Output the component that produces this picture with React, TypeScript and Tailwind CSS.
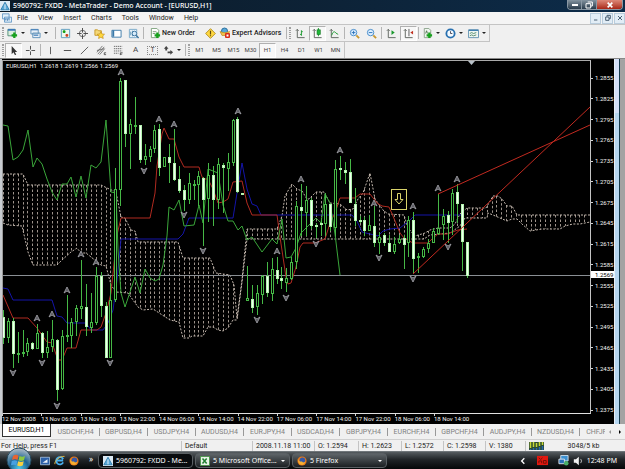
import type { ReactNode } from "react";
import clsx from "clsx";

type Point = [number, number];
// high, body top, body bottom, low, filled
type Candle = [number, number, number, number, 0 | 1];

const candles: Candle[] = [
  [310, 317, 338, 344, 1], [318, 321, 338, 343, 0], [318, 321, 354, 368, 1], [332, 353, 355, 363, 0],
  [330, 352, 353, 357, 0], [338, 343, 352, 356, 0], [342, 343, 349, 350, 1], [324, 333, 349, 349, 0],
  [332, 333, 353, 358, 1], [331, 347, 353, 358, 0], [320, 339, 347, 352, 0], [339, 340, 390, 401, 1],
  [330, 336, 389, 390, 0], [295, 335, 336, 342, 0], [318, 322, 336, 348, 0], [305, 308, 322, 336, 0],
  [260, 306, 309, 319, 0], [284, 307, 327, 336, 1], [293, 322, 328, 333, 0], [267, 276, 323, 325, 0],
  [272, 276, 306, 317, 1], [302, 306, 358, 358, 1], [283, 300, 358, 358, 0], [168, 189, 300, 302, 0],
  [78, 81, 190, 206, 0], [80, 80, 134, 147, 1], [119, 124, 134, 169, 0], [97, 125, 126, 134, 0],
  [125, 125, 160, 163, 1], [144, 156, 160, 165, 0], [146, 149, 157, 162, 0], [125, 130, 149, 153, 0],
  [124, 129, 168, 176, 1], [157, 157, 167, 167, 0], [144, 157, 163, 183, 1], [129, 163, 180, 181, 1],
  [166, 179, 191, 193, 1], [185, 190, 200, 211, 1], [173, 183, 200, 204, 0], [180, 184, 185, 200, 0],
  [171, 176, 185, 206, 0], [177, 178, 200, 246, 1], [163, 175, 199, 222, 0], [166, 175, 200, 226, 1],
  [158, 164, 200, 209, 0], [163, 165, 168, 213, 1], [153, 162, 169, 191, 0], [119, 120, 163, 166, 0],
  [117, 119, 192, 193, 1], [193, 193, 195, 195, 1], [266, 298, 301, 301, 0], [285, 299, 308, 313, 1],
  [285, 293, 307, 315, 0], [275, 276, 295, 304, 0], [262, 276, 293, 297, 1], [258, 269, 294, 301, 0],
  [257, 270, 279, 284, 1], [267, 278, 281, 289, 1], [268, 278, 283, 292, 0], [257, 262, 279, 280, 0],
  [201, 206, 262, 269, 0], [184, 207, 211, 236, 1], [186, 200, 213, 236, 0], [198, 200, 226, 229, 1],
  [223, 225, 226, 238, 1], [218, 223, 224, 236, 1], [193, 204, 224, 236, 0], [203, 204, 227, 231, 1],
  [160, 169, 228, 236, 0], [156, 168, 169, 180, 1], [162, 170, 173, 184, 1], [159, 172, 203, 203, 1],
  [188, 204, 221, 226, 1], [216, 220, 221, 223, 1], [217, 220, 231, 236, 1], [215, 225, 231, 231, 0],
  [206, 226, 243, 247, 1], [232, 237, 243, 254, 0], [233, 235, 243, 246, 1], [235, 243, 252, 252, 1],
  [237, 244, 252, 254, 0], [235, 239, 243, 244, 0], [235, 238, 245, 269, 1], [216, 220, 243, 257, 0],
  [212, 220, 259, 274, 1], [253, 256, 258, 273, 0], [247, 249, 257, 258, 0], [239, 243, 249, 253, 0],
  [228, 231, 243, 243, 0], [194, 228, 234, 235, 0], [209, 216, 225, 240, 0], [211, 215, 223, 243, 1],
  [189, 193, 222, 235, 0], [184, 192, 204, 223, 1], [204, 204, 242, 271, 1], [242, 242, 276, 278, 1],
];

const chikou = `3,125 8,126 13,160 18,157 23,150 28,130 33,167 37,158 42,164 47,179 52,192 57,200 62,184 67,184
 71,177 76,197 81,176 86,198 91,165 96,168 101,162 106,120 111,192 116,193 118,250 121,293 125,307 135,277
 140,293 145,269 150,278 155,281 159,279 163,265 167,236 169,207 174,210 179,200 184,226 194,225 199,205
 203,223 208,169 213,171 218,173 223,205 228,221 233,221 238,230 242,226 247,240 252,237 262,252 272,239
 277,244 282,219 286,258 291,257 296,248 301,233 316,218 321,223 325,194 330,203 335,234 340,275`;

const tenkan = `3,295 13,318 28,318 37,328 47,342 52,343 58,360 62,360 67,348 76,348 81,330 97,330 101,327
 106,313 111,293 117,235 121,218 150,218 155,193 157,166 162,134 164,128 169,139 174,139 179,157 184,167
 199,167 201,174 203,179 208,179 213,189 218,203 223,202 228,199 233,182 242,181 247,203 252,215 277,215
 280,237 286,277 288,284 291,283 296,267 300,247 303,243 315,243 325,239 330,223 335,213 340,198 355,198
 360,194 370,194 377,203 382,206 389,207 393,216 400,233 404,238 413,243 428,243 433,238 438,234 447,234
 458,230 467,229`;

const kijun = `3,288 8,289 13,300 52,300 57,316 62,317 67,323 86,323 91,330 103,330 108,323 113,310 117,280
 121,239 178,239 183,234 189,218 233,218 237,193 242,163 247,189 252,204 257,206 261,215 352,215 357,221
 362,232 378,236 383,231 390,229 400,228 410,220 415,215 462,215`;

const cloudTop: Point[] = [
  [3, 174], [23, 174], [28, 185], [101, 185], [107, 188], [116, 192], [121, 217], [125, 218], [131, 230],
  [135, 231], [138, 242], [178, 242], [183, 258], [210, 258], [216, 273], [230, 275], [234, 285], [237, 318],
  [242, 280], [247, 229], [277, 229], [282, 216], [285, 196], [292, 184], [297, 189], [302, 191], [307, 199],
  [309, 199], [316, 192], [324, 192], [330, 203], [340, 204], [347, 210], [353, 209], [358, 199], [363, 193],
  [370, 173], [375, 199], [383, 210], [388, 214], [404, 215], [408, 228], [415, 236], [425, 233], [430, 230],
  [438, 228], [450, 228], [455, 224], [460, 214], [467, 208], [486, 208], [493, 196], [498, 196], [502, 199],
  [507, 206], [512, 206], [517, 215], [590, 215],
];

const cloudBottom: Point[] = [
  [3, 223], [8, 225], [22, 226], [28, 252], [33, 265], [57, 265], [62, 260], [71, 252], [77, 248], [81, 253],
  [86, 253], [91, 257], [101, 265], [106, 266], [111, 285], [116, 292], [128, 293], [138, 307], [143, 310],
  [153, 309], [170, 320], [179, 322], [183, 338], [189, 338], [192, 336], [203, 336], [208, 327], [213, 327],
  [218, 330], [223, 331], [228, 328], [233, 320], [237, 320], [242, 282], [247, 239], [415, 239], [424, 239],
  [430, 235], [450, 233], [460, 226], [465, 218], [487, 218], [488, 213], [493, 215], [500, 218], [507, 221],
  [512, 219], [517, 219], [522, 224], [530, 231], [542, 229], [560, 229], [565, 226], [573, 224], [580, 224],
  [590, 222],
];

const peaks: Point[] = [
  [121, 72], [37, 318], [52, 314], [67, 290], [81, 254], [96, 262], [159, 119], [174, 124], [238, 111],
  [301, 179], [340, 150], [374, 203], [413, 206], [438, 188], [457, 179], [277, 251],
];

const valleys: Point[] = [
  [144, 171], [13, 373], [42, 363], [57, 406], [110, 363], [184, 215], [203, 251], [257, 320], [286, 298],
  [316, 244], [379, 258], [413, 279], [448, 247],
];

const prices = Array.from({ length: 17 }, (_, i) => (1.2855 - i * 0.003).toFixed(4));

const times = [
  "12 Nov 2008", "13 Nov 06:00", "13 Nov 14:00", "13 Nov 22:00", "14 Nov 06:00", "14 Nov 14:00",
  "14 Nov 22:00", "17 Nov 06:00", "17 Nov 14:00", "17 Nov 22:00", "18 Nov 06:00", "18 Nov 14:00",
];

const menus = ["File", "View", "Insert", "Charts", "Tools", "Window", "Help"];
const periods = ["M1", "M5", "M15", "M30", "H1", "H4", "D1", "W1", "MN"];
const symbols = [
  "USDCHF,H4", "GBPUSD,H4", "USDJPY,H4", "AUDUSD,H4", "EURJPY,H4", "USDCAD,H4",
  "GBPJPY,H4", "EURCHF,H4", "GBPCHF,H4", "AUDJPY,H4", "NZDUSD,H4", "CHFJPY,H4",
];

const barX = (i: number) => Math.round(3 + i * 4.885) + 0.5;

function yAt(line: Point[], x: number) {
  for (let i = 1; i < line.length; i++) {
    const [x0, y0] = line[i - 1];
    const [x1, y1] = line[i];
    if (x <= x1) return y0 + ((y1 - y0) * (x - x0)) / (x1 - x0);
  }
  return line[line.length - 1][1];
}

function Plot() {
  return (
    <svg viewBox="3 61 587 352" preserveAspectRatio="none" className="absolute inset-0 h-full w-full" fill="none">
      <g stroke="#c4b8ae" strokeWidth="1">
        <polyline points={cloudTop.join(" ")} strokeDasharray="2 1.5" />
        <polyline points={cloudBottom.join(" ")} strokeDasharray="2 1.5" />
        {Array.from({ length: 120 }, (_, i) => {
          const x = barX(i);
          return (
            <line key={i} x1={x} x2={x} y1={yAt(cloudTop, x)} y2={yAt(cloudBottom, x)} strokeDasharray="2.5 2" opacity="0.8" />
          );
        })}
      </g>
      <path d="M3 275.500H590" stroke="#8a8f94" />
      <polyline points={kijun} stroke="#1414a8" />
      <polyline points={tenkan} stroke="#b02a20" />
      <polyline points={chikou} stroke="#3aa63a" />
      {candles.map(([high, top, bottom, low, filled], i) => (
        <g key={i} stroke="#46b846">
          <path d={`M${barX(i)} ${high}V${top}M${barX(i)} ${bottom}V${low}`} />
          <rect
            x={barX(i) - 1}
            y={top + 0.5}
            width="2"
            height={Math.max(bottom - top - 1, 1)}
            fill={filled ? "#f0fff0" : "#000"}
            stroke={filled ? "#b4f5b0" : "#46b846"}
          />
        </g>
      ))}
      <g stroke="#c22a20">
        <path d="M438 194L590 125" />
        <path d="M413 274L590 107" />
      </g>
      <g fill="#55555c" stroke="#a8a8ae" strokeWidth="0.8">
        {peaks.map(([x, y]) => (
          <path key={`${x}-${y}`} d={`M${x - 3} ${y + 3}L${x} ${y - 3}L${x + 3} ${y + 3}L${x} ${y + 1}Z`} />
        ))}
        {valleys.map(([x, y]) => (
          <path key={`${x}-${y}`} d={`M${x - 3} ${y - 3}L${x} ${y + 3}L${x + 3} ${y - 3}L${x} ${y - 1}Z`} />
        ))}
      </g>
      <g stroke="#d9d36a">
        <rect x="391.500" y="189.500" width="15" height="20" />
        <path d="M397.500 193.500h3v6h2.500l-4 4.500l-4-4.500h2.500z" />
      </g>
      <path d="M468 61h7l-3.500 4z" fill="#b8c0c8" />
    </svg>
  );
}

function Chart() {
  return (
    <main className="flex min-h-0 flex-1 bg-[#a3a3a3]">
      <div className="w-0.5 bg-[#c8ccd0]" />
      <section className="flex min-w-0 flex-1 bg-black pt-px text-[6px] leading-[8px] text-[#f4f4f4]">
        <div className="flex min-w-0 flex-1 flex-col">
          <div className="relative min-h-0 flex-1 border border-l-[#9a9a9a] border-t-[#aaa] border-r-[#c4c4c4] border-b-[#e0e0e0]">
            <Plot />
            <p className="absolute left-[3px] top-px whitespace-pre">EURUSD,H1  1.2618 1.2619 1.2566 1.2569</p>
          </div>
          <div className="grid h-[10px] grid-cols-15 pt-px">
            {times.map((time) => (
              <span key={time} className="relative whitespace-nowrap">
                <i className="absolute -top-px left-0 h-0.5 w-px bg-[#d0d0d0]" />
                {time}
              </span>
            ))}
          </div>
        </div>
        <div className="relative flex w-[23px] flex-col justify-between pb-[10px] pt-[14px]">
          {prices.map((price) => (
            <span key={price} className="flex items-center gap-0.5">
              <i className="h-px w-0.5 bg-[#d0d0d0]" />
              {price}
            </span>
          ))}
          <span className="absolute left-0 top-[58%] w-full bg-white pl-1 leading-[7px] text-black">1.2569</span>
        </div>
      </section>
      <div className="flex w-[6px] flex-col border-l border-r border-l-[#e8f0f8] border-r-[#163a4c] bg-[#b6d6f0]">
        <div className="h-[54px] bg-[#d3dff8]" />
      </div>
      <div className="w-[5px] bg-[#a3a3a3]" />
    </main>
  );
}

function Icon({ children, size = "h-[11px] w-[11px]" }: { children: ReactNode; size?: string }) {
  return (
    <svg viewBox="0 0 12 12" className={clsx("shrink-0", size)} fill="none" strokeWidth="1" aria-hidden="true">
      {children}
    </svg>
  );
}

const plus = <path d="M8 5v6M5 8h6" stroke="#16a01c" strokeWidth="2.500" />;
const axes = <path d="M2.500 1.500v9h8M1 3l1.500-1.500L4 3" stroke="#5a5f5a" />;

function Tool({ label, pressed, children }: { label: string; pressed?: boolean; children: ReactNode }) {
  return (
    <button
      type="button"
      aria-label={label}
      className={clsx(
        "flex h-[15px] w-[17px] shrink-0 items-center justify-center",
        pressed && "border border-[#b0b0b0] border-r-white border-b-white bg-[#f8f8f8]",
      )}
    >
      {children}
    </button>
  );
}

function DropTool({ label, children }: { label: string; children: ReactNode }) {
  return (
    <button type="button" aria-label={label} className="flex h-[15px] w-[23px] shrink-0 items-center gap-[3px] pl-0.5">
      {children}
      <i className="border-x-2 border-t-2 border-x-transparent border-t-[#222]" />
    </button>
  );
}

const Sep = () => <i className="mx-px h-3 w-px shrink-0 bg-[#b4b4b4]" />;
const Grip = () => <i className="mx-px h-3 w-0.5 shrink-0 border-x border-dotted border-[#a0a0a0]" />;

function StandardToolbar() {
  return (
    <div className="flex h-[17px] w-[490px] items-center border-b border-r border-[#c4c4c4] pl-px">
      <Grip />
      <DropTool label="New chart">
        <Icon>
          <path d="M1 1.500h8v7H1z" fill="#dcefe0" stroke="#4f8c74" />
          <path d="M1 2h8" stroke="#3a78b8" strokeWidth="2" />
          {plus}
        </Icon>
      </DropTool>
      <DropTool label="Profiles">
        <Icon>
          <path d="M1 1.500h8v5H1zM3 5.500h8v5H3z" fill="#e8f0f8" stroke="#5d8fb8" />
          <path d="M1 2h8M4 8h5" stroke="#3a78b8" />
        </Icon>
      </DropTool>
      <div className="w-[3px]" />
      <Sep />
      <Tool label="Market Watch">
        <Icon>
          <path d="M1.500 1.500h9v9h-9z" fill="#eef8ee" stroke="#5c9cc0" />
          <path d="M3 4h3M4.500 2.500v3" stroke="#18a018" strokeWidth="2" />
          <path d="M6 8h3M7.500 6.500v3" stroke="#d04020" strokeWidth="2" />
        </Icon>
      </Tool>
      <Tool label="Data Window">
        <Icon>
          <circle cx="6" cy="6" r="3.500" stroke="#666" />
          <path d="M6 0v5M6 7v5M0 6h5M7 6h5" stroke="#444" />
        </Icon>
      </Tool>
      <Tool label="Navigator">
        <Icon>
          <path d="M1 2h3l1 1h3v5H1z" fill="#f4d878" stroke="#c89828" />
          <path d="M7.500 4l1.200 2.500 2.800.3-2 1.900.6 2.800-2.600-1.400L5 11.500l.5-2.800-2-1.900 2.800-.3z" fill="#ffd83c" stroke="#c08c18" strokeWidth=".7" />
        </Icon>
      </Tool>
      <Tool label="Terminal">
        <Icon>
          <path d="M1 2.500h10v7.500H1z" fill="#fff" stroke="#3a78a8" />
          <path d="M2.500 2.500v7" stroke="#3a78a8" strokeWidth="2" />
        </Icon>
      </Tool>
      <Tool label="Strategy Tester">
        <Icon>
          <path d="M1.500 1.500h8v9h-8z" fill="#e8f2fa" stroke="#78a8c8" />
          <path d="M3 8V4M5 9V3" stroke="#5890b0" />
          <circle cx="7" cy="6" r="2.500" fill="#d8ecfa" stroke="#38709c" />
          <path d="M9 8l2.500 3" stroke="#38709c" strokeWidth="1.500" />
        </Icon>
      </Tool>
      <Sep />
      <div className="w-[3px]" />
      <button type="button" className="flex w-[55px] shrink-0 items-center gap-px pl-[3px] text-[7px] font-medium whitespace-nowrap">
        <Icon>
          <path d="M1.500.5h6l2 2v8h-8z" fill="#fff" stroke="#78a078" />
          <path d="M3 4h4M3 6h3" stroke="#789878" />
          {plus}
        </Icon>
        New Order
      </button>
      <Tool label="MetaEditor">
        <Icon>
          <path d="M6 .7L11.300 6 6 11.300.7 6z" fill="#ffd840" stroke="#b08c20" />
          <path d="M6 3v4M6 8v1" stroke="#5c4810" strokeWidth="1.300" />
        </Icon>
      </Tool>
      <button type="button" className="flex w-[66px] shrink-0 items-center gap-px text-[7px] font-medium whitespace-nowrap">
        <Icon size="h-3 w-3">
          <circle cx="5.500" cy="4" r="3" fill="#58a8d8" stroke="#2c70a0" />
          <path d="M1 4.500c3 1.500 6 1.500 9.500 0L9 8.500H3z" fill="#f0c048" stroke="#c08c20" strokeWidth=".7" />
          <rect x="6" y="6" width="5" height="5" rx="1" fill="#d82c18" />
          <rect x="7.500" y="7.500" width="2" height="2" fill="#fff" />
        </Icon>
        Expert Advisors
      </button>
      <Sep />
      <Grip />
      <Tool label="Bar Chart">
        <Icon>{axes}<path d="M7 2.500v6M5.500 7H7M7 4h1.500" stroke="#18982c" /></Icon>
      </Tool>
      <Tool label="Candlesticks" pressed>
        <Icon>{axes}<path d="M7 0v9" stroke="#18982c" /><rect x="5.500" y="2" width="3.500" height="5" fill="#20b838" stroke="#107820" strokeWidth=".7" /></Icon>
      </Tool>
      <Tool label="Line Chart">
        <Icon>{axes}<path d="M3 8c1-4 3-5 4.500-2.500L10 7" stroke="#18982c" /></Icon>
      </Tool>
      <Sep />
      <Tool label="Zoom In">
        <Icon>
          <circle cx="5" cy="5" r="3.500" fill="#e0f0ff" stroke="#4088c8" />
          <path d="M5 3v4M3 5h4" stroke="#2870b8" />
          <path d="M8 8l3 3" stroke="#c89830" strokeWidth="2" />
        </Icon>
      </Tool>
      <Tool label="Zoom Out">
        <Icon>
          <circle cx="5" cy="5" r="3.500" fill="#e0f0ff" stroke="#4088c8" />
          <path d="M3 5h4" stroke="#2870b8" />
          <path d="M8 8l3 3" stroke="#c89830" strokeWidth="2" />
        </Icon>
      </Tool>
      <Sep />
      <Tool label="Auto Scroll">
        <Icon>{axes}<path d="M6 2.500l3.500 2.500L6 7.500z" fill="#18982c" /></Icon>
      </Tool>
      <Tool label="Chart Shift" pressed>
        <Icon>{axes}<path d="M6.500 1v8" stroke="#555" /><path d="M11 3v4L8 5z" fill="#c03020" /></Icon>
      </Tool>
      <Sep />
      <DropTool label="Indicators">
        <Icon>
          <path d="M2.500.5h5l2 2v8h-7z" fill="#eef6ee" stroke="#88a088" />
          <path d="M4 6l1-3 1 3" stroke="#507050" />
          {plus}
        </Icon>
      </DropTool>
      <DropTool label="Periods">
        <Icon>
          <circle cx="6" cy="6" r="4.500" fill="#f4faff" stroke="#2870b0" strokeWidth="2" />
          <path d="M6 3.500V6h2" stroke="#445" />
        </Icon>
      </DropTool>
      <DropTool label="Templates">
        <Icon>
          <path d="M.5 2h11v8.500H.5z" fill="#eef6f2" stroke="#6090b0" />
          <path d="M1 2.500h10" stroke="#4080b0" strokeWidth="1.500" />
          <path d="M2 6l2-1 2 1 3-1M2 8.500l2-1 2 1 3-1" stroke="#508868" />
        </Icon>
      </DropTool>
    </div>
  );
}

function LineToolbar() {
  return (
    <div className="flex h-[16px] w-[345px] items-center border-r border-[#c4c4c4] pl-px text-[6px] text-[#444]">
      <Grip />
      <Tool label="Cursor" pressed>
        <Icon><path d="M4 1v9l2-2 1.500 3L9 10.500 7.500 7.500H10z" fill="#333" /></Icon>
      </Tool>
      <Tool label="Crosshair">
        <Icon><path d="M6 1v4M6 7v4M1 6h4M7 6h4" stroke="#444" /></Icon>
      </Tool>
      <Sep />
      <Tool label="Vertical Line"><Icon><path d="M6 2v8" stroke="#555" /></Icon></Tool>
      <Tool label="Horizontal Line"><Icon><path d="M2 6h8" stroke="#444" /></Icon></Tool>
      <Tool label="Trendline"><Icon><path d="M2 10l8-8" stroke="#555" /></Icon></Tool>
      <Tool label="Equidistant Channel">
        <Icon>
          <path d="M1 8l6-7M2 10l7-8M4 10.500L9.500 4M1 6l8-2" stroke="#555" strokeWidth=".8" />
          <path d="M11 8.500H9v2h2" stroke="#333" strokeWidth=".8" />
        </Icon>
      </Tool>
      <Tool label="Fibonacci Retracement">
        <Icon>
          <path d="M1 1.500h9M1 4h9M1 6.500h9M1 9h5" stroke="#666" strokeDasharray="1.500 .7" />
          <path d="M8 11V8.500h2.500M8 10h2" stroke="#333" strokeWidth=".8" />
        </Icon>
      </Tool>
      <Tool label="Text"><span className="text-[8px] leading-none">A</span></Tool>
      <Tool label="Text Label">
        <span className="border border-dotted border-[#888] px-0.5 text-[7px] leading-[7px]">T</span>
      </Tool>
      <DropTool label="Arrows">
        <Icon>
          <path d="M1 4l2.500-3L6 4H4.500v2h-2V4zM5 7h3V5.500L11 8l-3 2.500V9H5z" fill="#444" />
        </Icon>
      </DropTool>
      <Sep />
      <Grip />
      {periods.map((period) => (
        <Tool key={period} label={period} pressed={period === "H1"}>{period}</Tool>
      ))}
    </div>
  );
}

function TaskButton({ title, active, menu, children }: { title: string; active?: boolean; menu?: boolean; children: ReactNode }) {
  return (
    <button
      type="button"
      className={clsx(
        "flex h-[15px] w-[95px] items-center gap-[3px] rounded-sm border border-[#5a6064] px-1 whitespace-nowrap text-white",
        active ? "bg-[#090c0f]" : "bg-linear-to-b from-[#5e6468] to-[#1c2023]",
      )}
    >
      {children}
      <span className="flex-1 text-left">{title}</span>
      {menu && <i className="border-x-2 border-t-2 border-x-transparent border-t-white" />}
    </button>
  );
}

const firefox = (
  <Icon size="h-[10px] w-[10px]">
    <circle cx="6" cy="6" r="5.500" fill="#e87818" />
    <circle cx="6.500" cy="5" r="3.300" fill="#3458a8" />
    <path d="M1 3c1 4 3 4 5 3.500 1 2 3 1.500 4 0-.5 3-3 4.500-5 4S1 8 1 3z" fill="#f8b030" />
  </Icon>
);

function Taskbar() {
  return (
    <footer className="flex h-[18px] items-center border-t border-[#70767a] bg-linear-to-b from-[#555b5f] via-[#202427] via-45% to-[#060809] font-['Noto_Sans','Open_Sans',sans-serif] text-[7px] text-white">
      <button type="button" aria-label="Start" className="relative h-full w-9">
        <svg viewBox="0 0 26 22" className="absolute -top-1 left-1.5 h-[22px] w-[26px]" aria-hidden="true">
          <defs>
            <radialGradient id="orb" cx="50%" cy="85%" r="80%">
              <stop offset="0" stopColor="#4cc8e8" />
              <stop offset=".5" stopColor="#1d6494" />
              <stop offset="1" stopColor="#a8b8c4" />
            </radialGradient>
          </defs>
          <circle cx="13" cy="12" r="12" fill="url(#orb)" stroke="#24485c" />
          <path d="M7 8c2-1.500 4-1.500 5.500-.3L11.500 12C10 11 8 11 6 12z" fill="#e86430" />
          <path d="M13.500 8c2 1 3.500 1 5.500 0l-1 4.300c-2 1-4 1-5.500 0z" fill="#8cc840" />
          <path d="M5.700 13c2-1 4-1 5.500 0l-1 4.300C9 16.500 7 16.500 5 17.300z" fill="#48a0e0" />
          <path d="M12.200 13.300c2 1 3.500 1 5.500 0l-1 4.200c-2 1-4 1-5.500 0z" fill="#f8d040" />
        </svg>
      </button>
      <nav className="flex w-[62px] items-center gap-1 pl-1" aria-label="Quick Launch">
        <button type="button" aria-label="Show desktop">
          <Icon size="h-[10px] w-[10px]">
            <path d="M.5 1.500h11v9H.5z" fill="#2c60a8" stroke="#a8c4e0" />
            <path d="M3 8l6-4v4z" fill="#e8f0f8" />
          </Icon>
        </button>
        <button type="button" aria-label="Internet Explorer">
          <Icon size="h-[11px] w-[11px]">
            <path d="M10 8a4 4 0 1 1 0-3.500M3 6h7" stroke="#48b0f0" strokeWidth="2" />
            <path d="M1 10C0 7 6 1 11.500 1.500" stroke="#f0c040" />
          </Icon>
        </button>
        <button type="button" aria-label="Firefox">{firefox}</button>
        <button type="button" aria-label="More" className="ml-1.5 pb-1 text-[8px] leading-none">»</button>
      </nav>
      <div className="flex flex-1 gap-0.5">
        <TaskButton title="5960792: FXDD - Me..." active>
          <Logo />
        </TaskButton>
        <TaskButton title="5 Microsoft Office..." menu>
          <Icon size="h-[10px] w-[10px]">
            <path d="M.5.5h11v11H.5z" fill="#e8f4e8" stroke="#389038" />
            <path d="M3 3l5 6M8 3L3 9" stroke="#208030" strokeWidth="1.800" />
          </Icon>
        </TaskButton>
        <TaskButton title="5 Firefox" menu>{firefox}</TaskButton>
      </div>
      <div className="flex items-center gap-1 pr-2">
        <button type="button" aria-label="Show hidden icons">
          <Icon size="h-2 w-2"><path d="M8 2L4 6l4 4" stroke="#fff" strokeWidth="2" /></Icon>
        </button>
        <span className="w-0.5" />
        <Icon>
          <path d="M0 1h12v10H0z" fill="#e01810" />
          <path d="M2 3l2 2 2-2M2 9V6.500h3V9M7 9V6h3v3z" stroke="#701008" />
        </Icon>
        <span className="w-0.5" />
        <Icon>
          <path d="M3 .5h8v6H3z" fill="#3c90d0" stroke="#d0e0f0" />
          <path d="M1 4.500h6v5H1z" fill="#2870b8" stroke="#e0e8f0" />
          <circle cx="9" cy="9" r="2.500" fill="#48b068" />
        </Icon>
        <Icon size="h-[10px] w-[10px]">
          <path d="M1 4h2.500L7 1v10L3.500 8H1z" fill="#f0f0f0" />
          <path d="M9 3.500c1.500 1.500 1.500 3.500 0 5" stroke="#d8d8d8" />
        </Icon>
        <time className="whitespace-nowrap">12:48 PM</time>
      </div>
    </footer>
  );
}

function Logo() {
  return (
    <Icon size="h-[10px] w-[10px]">
      <path d="M0 0h12v12H0z" fill="#dceaf4" />
      <path d="M6 1.500L11 10.500H1z" fill="#58a8d8" stroke="#2878a8" />
      <path d="M6 4v6" stroke="#fff" />
    </Icon>
  );
}

export default function App() {
  return (
    <div className="flex h-screen flex-col overflow-hidden bg-[#f0f0f0] font-[Roboto,'Noto_Sans',sans-serif] text-[7px] leading-[10px] text-[#1c1c1c]">
      <header className="flex h-3 shrink-0 items-center justify-between bg-linear-to-r from-[#0b1a26] via-[#0d2236] to-[#0c2c4a] pr-0.5 text-white">
        <h1 className="flex items-center gap-[3px] font-['Noto_Sans','Open_Sans',sans-serif] text-[7px] font-medium whitespace-nowrap">
          <Logo />
          5960792: FXDD - MetaTrader - Demo Account - [EURUSD,H1]
        </h1>
        <div className="flex h-[10px] self-start overflow-hidden rounded-b-sm border border-t-0 border-[#8a98a4]">
          <button type="button" aria-label="Minimize" className="flex w-[14px] items-center justify-center border-r border-[#8a98a4] bg-linear-to-b from-[#8494a0] to-[#2a3c4c]">
            <i className="h-0.5 w-1.5 bg-white" />
          </button>
          <button type="button" aria-label="Restore" className="flex w-[15px] items-center justify-center border-r border-[#8a98a4] bg-linear-to-b from-[#8494a0] to-[#2a3c4c]">
            <Icon size="h-2 w-2"><path d="M4 1.500h7v6H9M1.500 4h7v6.500h-7z" stroke="#fff" strokeWidth="1.500" /></Icon>
          </button>
          <button type="button" aria-label="Close" className="flex w-[25px] items-center justify-center bg-linear-to-b from-[#dc8878] to-[#a82414]">
            <Icon size="h-2 w-2"><path d="M2.500 2.500l7 7M9.500 2.500l-7 7" stroke="#fff" strokeWidth="2.500" /></Icon>
          </button>
        </div>
      </header>

      <div className="flex h-[13px] shrink-0 items-center border-b border-[#c4c4c4] bg-[#f4f4f4]">
        <Icon size="ml-0.5 mr-[5px] h-[10px] w-[10px]">
          <path d="M.5 1h8v6h-8zM3 5h8.500v6H3z" fill="#e4f0fa" stroke="#5890c0" />
          <path d="M4.500 9V7M6.500 9.500V7M8.500 9V6.500" stroke="#4880b0" />
        </Icon>
        <nav className="flex flex-1 gap-[10px]">
          {menus.map((menu) => (
            <button key={menu} type="button">{menu}</button>
          ))}
        </nav>
        <div className="flex gap-px">
          {["M3 9h5", "M4.500 4V2h5v5h-2M2.500 4.500h5v5h-5z", "M3 3l6 6M9 3l-6 6"].map((d, i) => (
            <button
              key={d}
              type="button"
              aria-label={["Minimize chart", "Restore chart", "Close chart"][i]}
              className="flex h-[11px] w-[11px] items-center justify-center border border-[#b8ccdc] bg-[#e2edf6]"
            >
              <Icon size="h-2 w-2"><path d={d} stroke="#4a6074" strokeWidth="1.500" /></Icon>
            </button>
          ))}
        </div>
      </div>

      <div className="shrink-0 border-b border-[#888]">
        <StandardToolbar />
        <LineToolbar />
      </div>

      <Chart />

      <nav className="flex h-[15px] shrink-0 items-center pl-0.5 text-[#808080]">
        <button type="button" className="mr-px flex h-[13px] w-[49px] shrink-0 items-center justify-center self-start border border-t-0 border-[#333] bg-white text-black">
          EURUSD,H1
        </button>
        <div className="flex min-w-0 flex-1 overflow-hidden">
          {symbols.map((symbol) => (
            <button key={symbol} type="button" className="w-12 shrink-0 border-r border-[#999] leading-[8px]">
              {symbol}
            </button>
          ))}
        </div>
        <button type="button" aria-label="Scroll tabs left" className="flex w-[10px] justify-center">
          <i className="border-y-2 border-r-2 border-y-transparent border-r-[#999]" />
        </button>
        <button type="button" aria-label="Scroll tabs right" className="flex w-[10px] justify-center">
          <i className="border-y-2 border-l-2 border-y-transparent border-l-black" />
        </button>
      </nav>

      <div className="flex h-[12px] shrink-0 items-center border-t border-[#d0d0d0] whitespace-nowrap *:border-r *:border-[#c4c4c4] *:pl-[3px]">
        <span className="w-[182px] pl-px!">For Help, press F1</span>
        <span className="w-[71px]">Default</span>
        <span className="w-[62px]">2008.11.18 11:00</span>
        <span className="w-11">O: 1.2594</span>
        <span className="w-[43px]">H: 1.2623</span>
        <span className="w-[42px]">L: 1.2572</span>
        <span className="w-[42px]">C: 1.2598</span>
        <span className="w-10">V: 1380</span>
        <span className="flex flex-1 items-center border-r-0!">
          <svg viewBox="0 0 15 8" className="h-2 w-[15px]" aria-hidden="true">
            <path d="M0 0h15v8H0z" fill="#2c4c30" />
            <path d="M1.500 0v6M4.500 0v5M7.500 1v4M10.500 0v4M13.500 0v3" stroke="#c8d838" strokeWidth="1.500" />
            <path d="M1.500 7v1M4.500 6v2M7.500 6v2M10.500 5v3M13.500 4v4" stroke="#2868b0" strokeWidth="1.500" />
          </svg>
          <span className="flex-1 pr-0.5 text-center">3048/5 kb</span>
        </span>
      </div>

      <Taskbar />
    </div>
  );
}
